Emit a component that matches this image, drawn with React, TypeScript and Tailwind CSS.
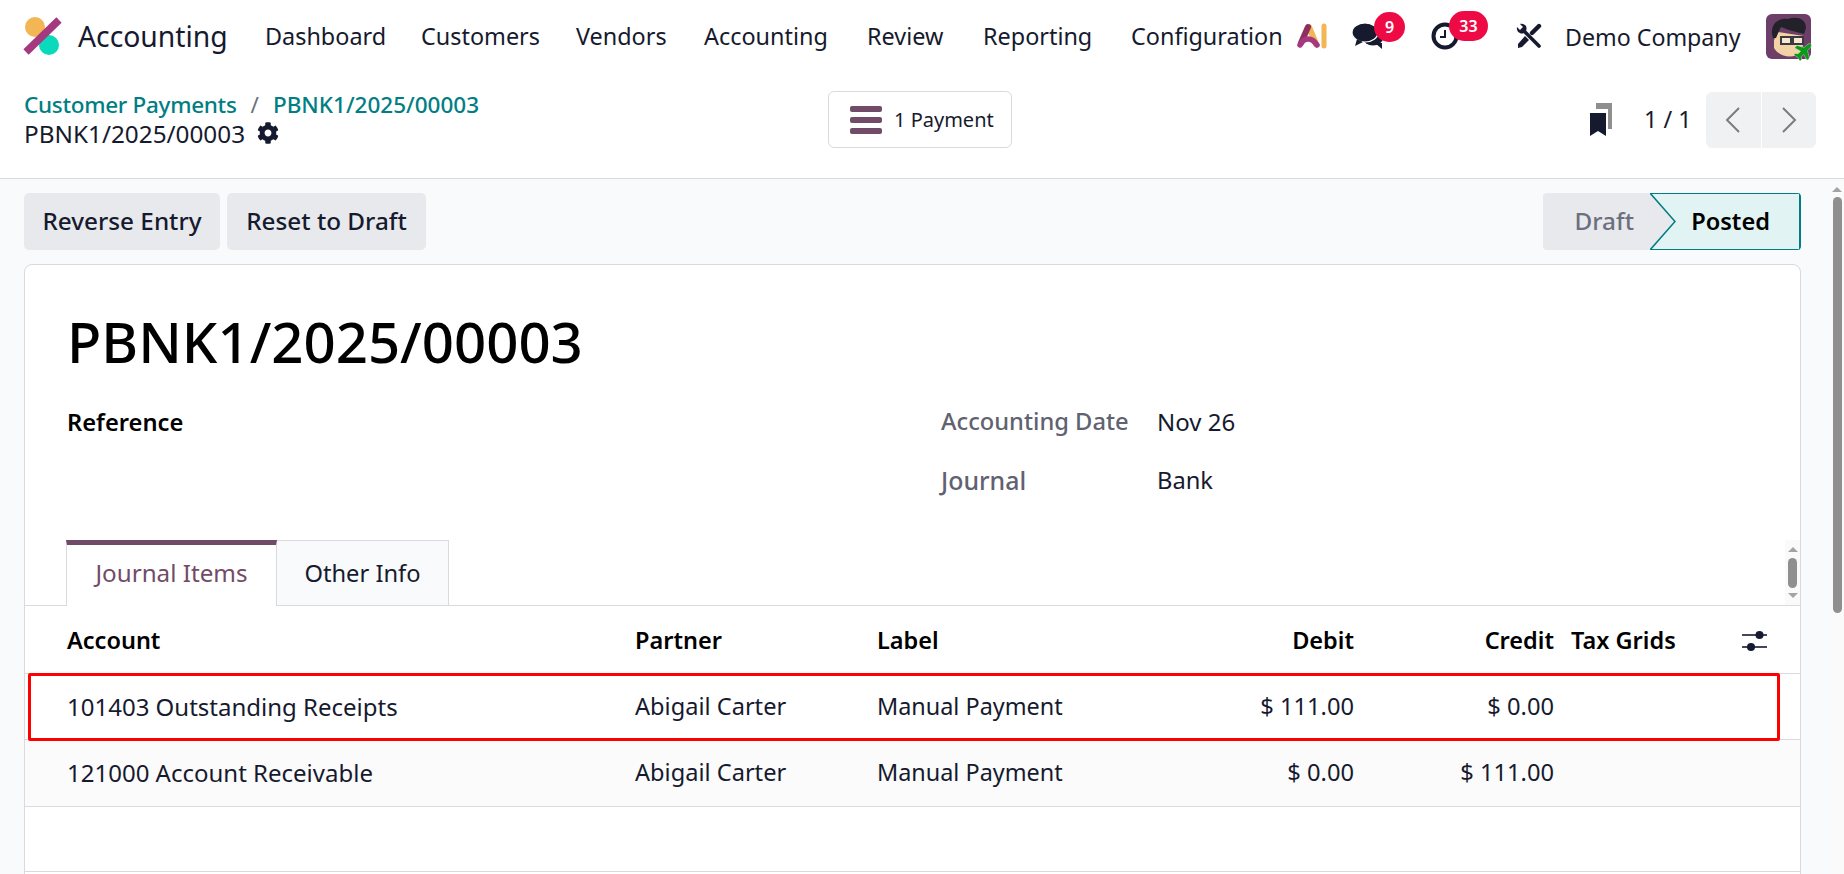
import { FaCog, FaPlane } from 'react-icons/fa'

const navItems = [
  { label: 'Dashboard', width: 'w-[156px]' },
  { label: 'Customers', width: 'w-[155px]' },
  { label: 'Vendors', width: 'w-[128px]' },
  { label: 'Accounting', width: 'w-[163px]' },
  { label: 'Review', width: 'w-[116px]' },
  { label: 'Reporting', width: 'w-[148px]' },
  { label: 'Configuration', width: 'w-[166px]' },
]

function Logo() {
  return (
    <svg width="41" height="40" viewBox="0 0 41 40" className="shrink-0">
      <circle cx="13" cy="11" r="10" fill="#f2b654" />
      <circle cx="27" cy="29" r="10" fill="#0bd9bb" />
      <line x1="37" y1="4" x2="4" y2="36" stroke="#a5387f" strokeWidth="7.5" />
    </svg>
  )
}

function AiLogo() {
  return (
    <svg width="30" height="26" viewBox="0 0 30 26" className="shrink-0">
      <line x1="12" y1="4" x2="19" y2="21" stroke="#f2b654" strokeWidth="6" strokeLinecap="round" />
      <line x1="11" y1="4" x2="4" y2="20" stroke="#8c2f5f" strokeWidth="6" strokeLinecap="round" />
      <path d="M3 22 C 7 14, 15 14, 20 22" fill="none" stroke="#a5387f" strokeWidth="5.5" strokeLinecap="round" />
      <line x1="27" y1="3" x2="27" y2="23" stroke="#f2b654" strokeWidth="5" strokeLinecap="round" />
    </svg>
  )
}

function ChatIcon() {
  return (
    <svg width="32" height="26" viewBox="0 0 32 26">
      <ellipse cx="21" cy="15" rx="10" ry="7.5" fill="#161a2e" />
      <polygon points="23,20 30,20 30,26" fill="#161a2e" />
      <ellipse cx="13" cy="9.5" rx="13" ry="9.5" fill="#161a2e" stroke="#fff" strokeWidth="1.2" />
      <polygon points="5,16 11,19 3,23" fill="#161a2e" />
    </svg>
  )
}

function ClockIcon() {
  return (
    <svg width="28" height="28" viewBox="0 0 28 28">
      <circle cx="14" cy="14" r="11.5" fill="none" stroke="#161a2e" strokeWidth="4" />
      <polyline points="14,8 14,15 9,15" fill="none" stroke="#161a2e" strokeWidth="2" />
    </svg>
  )
}

function ToolsIcon() {
  return (
    <svg width="26" height="26" viewBox="0 0 26 26">
      <line x1="7" y1="7" x2="23" y2="23" stroke="#161a2e" strokeWidth="3.6" strokeLinecap="round" />
      <path d="M1 4 L4 7 L7 4 L4 1 C 8 0, 12 3, 10 8 L8 10 C 4 12, 0 8, 1 4 Z" fill="#161a2e" />
      <line x1="23" y1="3" x2="16" y2="10" stroke="#161a2e" strokeWidth="4.4" strokeLinecap="round" />
      <polygon points="9,13 13,17 6,24 2,25 2,21" fill="#161a2e" />
    </svg>
  )
}

function Avatar() {
  return (
    <div className="relative h-[45px] w-[45px] shrink-0">
      <svg width="45" height="45" viewBox="0 0 45 45">
        <rect width="45" height="45" rx="6" fill="#6d3f68" />
        <path d="M8 26 L8 34 C 14 44, 28 45, 36 38 L 38 22 L 12 18 Z" fill="#f3d3a6" />
        <path d="M6 20 C 5 8, 14 4, 22 5 C 30 2, 40 4, 40 14 L 38 20 C 32 18, 24 17, 15 13 C 13 17, 12 20, 10 24 L 7 24 Z" fill="#23222a" />
        <rect x="15" y="23" width="10" height="7" fill="#fff" fillOpacity="0.45" stroke="#3a3a40" strokeWidth="2" />
        <rect x="27" y="23" width="10" height="7" fill="#fff" fillOpacity="0.45" stroke="#3a3a40" strokeWidth="2" />
      </svg>
      <FaPlane className="absolute -bottom-[2px] -right-[3px] -rotate-45 text-[20px] text-[#0a9a19]" stroke="#fff" strokeWidth={10} />
    </div>
  )
}

function Badge({ text, width }: { text: string; width: string }) {
  return (
    <span className={`absolute -top-[11px] flex h-[30px] items-center justify-center rounded-full bg-[#ee0b45] text-[16px] font-semibold text-white ${width}`}>
      {text}
    </span>
  )
}

function BookmarkIcon() {
  return (
    <svg width="24" height="33" viewBox="0 0 24 33">
      <path d="M6 0 H22 V26 H18 V6 H6 Z" fill="#8f8f8f" />
      <path d="M0 10 H16 V33 L8 28 L0 33 Z" fill="#161a2e" />
    </svg>
  )
}

function Chevron({ dir }: { dir: 'left' | 'right' }) {
  return (
    <svg width="16" height="26" viewBox="0 0 16 26">
      <polyline
        points={dir === 'left' ? '14,1 2,13 14,25' : '2,1 14,13 2,25'}
        fill="none"
        stroke="#7c7c7c"
        strokeWidth="2"
      />
    </svg>
  )
}

function OptionsIcon() {
  return (
    <svg width="26" height="22" viewBox="0 0 26 22">
      <line x1="0" y1="5" x2="25" y2="5" stroke="#161a2e" strokeWidth="1.6" />
      <circle cx="17.5" cy="5" r="4" fill="#161a2e" />
      <line x1="0" y1="17" x2="25" y2="17" stroke="#161a2e" strokeWidth="1.6" />
      <circle cx="9" cy="17" r="4" fill="#161a2e" />
    </svg>
  )
}

function ArrowUp() {
  return <div className="h-0 w-0 border-x-[5px] border-b-[5px] border-x-transparent border-b-[#a3a3a3]" />
}

function ArrowDown() {
  return <div className="h-0 w-0 border-x-[5px] border-t-[5px] border-x-transparent border-t-[#a3a3a3]" />
}

function JournalRow({ account, debit, credit, rowHeight, shade }: { account: string; debit: string; credit: string; rowHeight: string; shade?: boolean }) {
  return (
    <div className={`flex items-center border-b border-[#d8dadd] pl-[42px] text-[23.4px] ${rowHeight} ${shade ? 'bg-[#fbfbfb]' : ''}`}>
      <span className="w-[568px] text-[24px]">{account}</span>
      <span className="w-[242px] text-[23.6px]">Abigail Carter</span>
      <span className="w-[277px]">Manual Payment</span>
      <span className="w-[200px] text-right text-[23.7px]">{debit}</span>
      <span className="w-[200px] text-right text-[23.7px]">{credit}</span>
    </div>
  )
}

export default function App() {
  return (
    <div className="flex h-[874px] w-[1844px] flex-col overflow-hidden bg-white text-[23.4px] text-[#161a2e] [font-family:'Noto_Sans',sans-serif]">
      {/* top nav */}
      <header className="flex h-[74px] shrink-0 items-center pb-[2px] pl-[22px]">
        <Logo />
        <span className="ml-[15px] w-[187px] text-[28.3px]">Accounting</span>
        {navItems.map((item) => (
          <span key={item.label} className={`pt-[2px] ${item.width}`}>{item.label}</span>
        ))}
        <AiLogo />
        <div className="relative ml-[25px] flex w-[79px]">
          <ChatIcon />
          <Badge text="9" width="left-[22px] w-[31px]" />
        </div>
        <div className="relative flex w-[85px]">
          <ClockIcon />
          <Badge text="33" width="left-[18px] w-[39px]" />
        </div>
        <ToolsIcon />
        <span className="ml-[23px] w-[201px] pt-[2px] text-[23.2px]">Demo Company</span>
        <Avatar />
      </header>

      {/* control panel */}
      <div className="flex h-[105px] shrink-0 items-center border-b border-[#d8dadd] pl-[24px]">
        <div className="w-[804px] pb-[15px] leading-[29px]">
          <div className="flex text-[22.5px] font-medium text-[#017e84]">
            <span className="tracking-[-0.3px]">Customer Payments</span>
            <span className="mx-[14px] font-normal text-[#6b7280]">/</span>
            <span>PBNK1/2025/00003</span>
          </div>
          <div className="flex items-center gap-[12px] text-[24.3px]">
            <span>PBNK1/2025/00003</span>
            <FaCog className="text-[22px]" />
          </div>
        </div>
        <div className="-mt-[13px] flex h-[57px] w-[184px] items-center rounded-[6px] border border-[#d8dadd] pl-[21px] text-[20px]">
          <div className="flex w-[32px] flex-col gap-[5px]">
            <div className="h-[6px] rounded-[2px] bg-[#714b67]" />
            <div className="h-[6px] rounded-[2px] bg-[#714b67]" />
            <div className="h-[6px] rounded-[2px] bg-[#714b67]" />
          </div>
          <span className="ml-[12px]">1 Payment</span>
        </div>
        <div className="-mt-[13px] ml-[578px] flex items-center">
          <BookmarkIcon />
          <span className="ml-[30px] w-[62px] text-[23.4px]">1 / 1</span>
          <div className="flex h-[56px] w-[110px] gap-px overflow-hidden rounded-[6px]">
            <div className="flex flex-1 items-center justify-center bg-[#f0f1f3]"><Chevron dir="left" /></div>
            <div className="flex flex-1 items-center justify-center bg-[#f0f1f3]"><Chevron dir="right" /></div>
          </div>
        </div>
      </div>

      <div className="flex min-h-0 flex-1 bg-[#f9fafb]">
        {/* sheet */}
        <div className="min-w-0 flex-1 pl-[24px] pr-[29px] pt-[14px]">
          <div className="flex h-[57px] items-center text-[24.3px] font-medium">
            <div className="flex h-full w-[196px] items-center justify-center rounded-[5px] bg-[#e7e9ed]">Reverse Entry</div>
            <div className="ml-[7px] flex h-full w-[199px] items-center justify-center rounded-[5px] bg-[#e7e9ed]">Reset to Draft</div>
            <div className="ml-auto flex h-full w-[258px] overflow-hidden rounded-[4px]">
              <div className="flex w-[108px] items-center justify-end bg-[#e7e9ed] pr-[17px] text-[#6b6f7e]">Draft</div>
              <div className="relative flex flex-1 items-center justify-end border-y-[1.5px] border-r-2 border-[#017e84] bg-[#e2f3f3] pr-[29px] text-[23.6px] font-semibold text-black">
                Posted
                <svg width="26" height="57" viewBox="0 0 26 57" className="absolute -left-px -top-[1.5px]">
                  <polygon points="0,0 25,28.5 0,57" fill="#e7e9ed" />
                  <polyline points="0,0 25,28.5 0,57" fill="none" stroke="#017e84" strokeWidth="1.5" />
                </svg>
              </div>
            </div>
          </div>

          <div className="mt-[14px] h-[700px] rounded-t-[8px] border border-[#d8dadd] bg-white">
            <div className="ml-[42px] mt-[31px] flex h-[90px] items-center text-[56.3px] font-medium text-black">PBNK1/2025/00003</div>
            <div className="mt-[6px] grid h-[118px] grid-cols-[874px_216px_1fr] grid-rows-[59px_59px] items-center pl-[42px] text-[23.7px]">
              <span className="pt-[2px] font-semibold text-black">Reference</span>
              <span className="pt-[1px] font-medium text-[#5f6270]">Accounting Date</span>
              <span className="text-[24px]">Nov 26</span>
              <span />
              <span className="text-[24.9px] font-medium text-[#5f6270]">Journal</span>
              <span className="text-[23.7px]">Bank</span>
            </div>

            {/* tabs */}
            <div className="mt-[30px] flex h-[66px] border-b border-[#d8dadd]">
              <div className="ml-[41px] -mb-px flex h-[66px] w-[211px] items-center justify-center border-x border-[#d8dadd] border-t-[5px] border-t-[#714b67] bg-white pb-[4px] text-[24.2px] text-[#714b67]">
                Journal Items
              </div>
              <div className="-mb-px flex h-[65px] w-[172px] items-center justify-center border-r border-t border-[#d8dadd] bg-[#f9fafb] pt-[2px] text-[23.7px]">
                Other Info
              </div>
              <div className="ml-auto -mb-px flex h-[65px] w-[15px] flex-col items-center justify-between bg-[#fafafa] pb-[7px] pt-[7px]">
                <ArrowUp />
                <div className="h-[30px] w-[9px] rounded-full bg-[#8f8f8f]" />
                <ArrowDown />
              </div>
            </div>

            {/* lines table */}
            <div className="flex h-[68px] items-center border-b border-[#d8dadd] pl-[42px] pt-[2px] text-[23.5px] font-semibold text-black">
              <span className="w-[568px]">Account</span>
              <span className="w-[242px]">Partner</span>
              <span className="w-[277px]">Label</span>
              <span className="w-[200px] text-right">Debit</span>
              <span className="w-[200px] text-right">Credit</span>
              <span className="ml-[17px] w-[171px]">Tax Grids</span>
              <OptionsIcon />
            </div>
            <div className="relative">
              <JournalRow account="101403 Outstanding Receipts" debit="$ 111.00" credit="$ 0.00" rowHeight="h-[66px]" />
              <div className="absolute -top-[1px] left-[3px] h-[68px] w-[1752px] rounded-[2px] border-[3px] border-[#ff0000]" />
            </div>
            <JournalRow account="121000 Account Receivable" debit="$ 0.00" credit="$ 111.00" rowHeight="h-[67px]" shade />
            <div className="h-[65px] border-b border-[#d8dadd]" />
          </div>
        </div>

        {/* page scrollbar */}
        <div className="flex w-[14px] shrink-0 flex-col items-center bg-[#fafafa] pt-[8px]">
          <ArrowUp />
          <div className="mt-[5px] h-[416px] w-[9px] rounded-full bg-[#8f8f8f]" />
        </div>
      </div>
    </div>
  )
}
